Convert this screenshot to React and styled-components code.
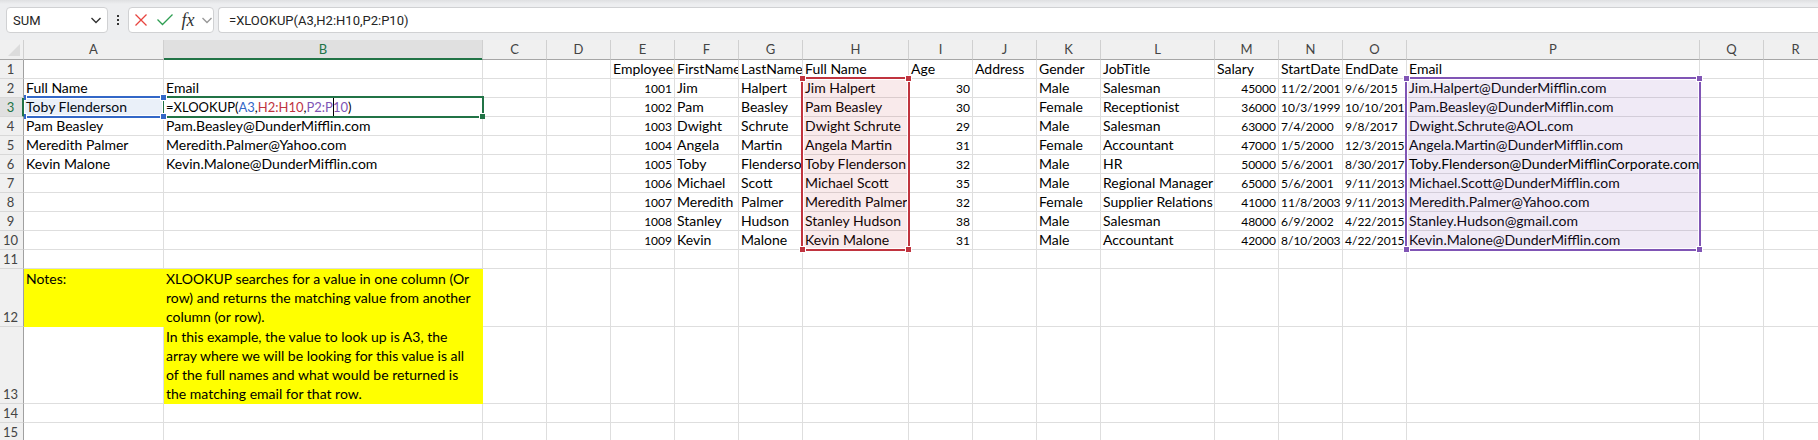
import React from "react";
import styled, { createGlobalStyle, css } from "styled-components";

const GlobalStyle = createGlobalStyle`
  * { box-sizing: border-box; }
  body {
    margin: 0;
    background: #fff;
    color: #000;
    font-family: Lato, "Open Sans", sans-serif;
    font-size: 14px;
  }
`;

const Workbook = styled.main`
  min-height: 100vh;
  overflow: hidden;
`;

const FormulaBar = styled.form`
  display: flex;
  align-items: flex-start;
  height: 40px;
  padding: 7px 0 0 6px;
  background: linear-gradient(#dfe0e2, #edeef0 4px);
`;

const box = css`
  height: 26px;
  background: #fff;
  border: 1px solid #d0d1d3;
  border-radius: 4px;
`;

const NameBox = styled.div`
  ${box}
  display: flex;
  align-items: center;
  width: 102px;
  padding: 0 6px;
`;

const NameInput = styled.input`
  flex: 1;
  min-width: 0;
  padding: 0;
  border: 0;
  outline: 0;
  background: none;
  color: #242424;
  font: 13px Roboto, sans-serif;
`;

const IconButton = styled.button`
  display: flex;
  align-items: center;
  justify-content: center;
  height: 24px;
  padding: 0;
  border: 0;
  background: none;
`;

const FunctionButton = styled(IconButton)`
  width: 16px;
  color: #333;
  font: italic 18px "Liberation Serif", serif;
`;

const Grip = styled.div`
  display: flex;
  align-items: center;
  justify-content: center;
  width: 20px;
  height: 26px;
`;

const Actions = styled.div`
  ${box}
  display: flex;
  gap: 6px;
  width: 86px;
  padding-left: 5px;
  margin-right: 4px;
`;

const FormulaInput = styled.input`
  ${box}
  flex: 1;
  min-width: 0;
  padding: 0 10px;
  border-right: 0;
  border-radius: 4px 0 0 4px;
  outline: 0;
  color: #242424;
  font: 13px Roboto, sans-serif;
`;

const Sheet = styled.table`
  width: 1828px;
  table-layout: fixed;
  border-collapse: separate;
  border-spacing: 0;
`;

const Column = styled.col`
  width: ${(p) => p.$width}px;
`;

const ColumnHeader = styled.th`
  height: 20px;
  padding: 0;
  background: ${(p) => (p.$active ? "#e0e0e0" : "#f0f0f0")};
  border-right: 1px solid #d0d0d0;
  border-bottom: 1px solid ${(p) => (p.$active ? "#217346" : "#a6a6a6")};
  box-shadow: ${(p) => (p.$active ? "inset 0 -1px #217346" : "none")};
  color: ${(p) => (p.$active ? "#217346" : "#444")};
  font-size: 13px;
  font-weight: 400;
  line-height: 19px;
`;

const SelectAllButton = styled.button`
  display: flex;
  justify-content: flex-end;
  width: 100%;
  height: 19px;
  padding: 4px 3px 0 0;
  border: 0;
  background: none;
`;

const RowHeader = styled.th`
  position: relative;
  z-index: 3;
  height: ${(p) => p.$height}px;
  padding: 0 ${(p) => (p.$active ? 1 : 2)}px 0 0;
  vertical-align: bottom;
  background: ${(p) => (p.$active ? "#e0e0e0" : "#f0f0f0")};
  border-right: ${(p) => (p.$active ? "2px solid #217346" : "1px solid #a0a0a0")};
  border-bottom: 1px solid #d8d8d8;
  color: ${(p) => (p.$active ? "#217346" : "#444")};
  font-weight: 400;
  line-height: 18px;
`;

const Cell = styled.td`
  position: relative;
  padding: 0;
  vertical-align: ${(p) => (p.$note ? "top" : "bottom")};
  background: ${(p) => (p.$note ? "#ff0" : "#fff")};
  border-right: 1px solid ${(p) => (p.$note ? "#ff0" : "#dedede")};
  border-bottom: 1px solid ${(p) => (p.$note ? "#ff0" : "#dedede")};
  text-align: ${(p) => (p.$number ? "right" : "left")};
`;

const Value = styled.div`
  position: ${(p) => (p.$spill ? "relative" : "static")};
  z-index: 2;
  height: ${(p) => (p.$wrap ? "auto" : "18px")};
  padding-left: 2px;
  padding-right: ${(p) => (p.$wrap ? 6 : p.$number ? 2 : 0)}px;
  overflow: ${(p) => (p.$spill ? "visible" : "hidden")};
  white-space: ${(p) => (p.$wrap ? "normal" : "nowrap")};
  line-height: ${(p) => (p.$wrap ? 19 : 18)}px;
`;

const Digits = styled.span`
  font-size: 12px;
  line-height: 1;
`;

const Formula = styled.span`
  font-size: 13px;
  line-height: 1;
`;

const tones = {
  blue: ["#3367c7", "rgba(51, 103, 199, 0.1)"],
  red: ["#c0343f", "rgba(192, 52, 63, 0.1)"],
  purple: ["#8055b5", "rgba(128, 85, 181, 0.12)"],
};

const RangeOutline = styled.div`
  position: absolute;
  z-index: 2;
  top: -2px;
  left: -2px;
  width: calc(100% + 4px);
  height: ${(p) => p.$rows * 19 + 3}px;
  pointer-events: none;
  border: 2px solid ${(p) => tones[p.$tone][0]};
  ${(p) => p.$openSides && "border-left-color: transparent; border-right-color: transparent;"}
  background: ${(p) => tones[p.$tone][1]};
  background-clip: padding-box;
  box-shadow: inset 0 0 0 1px #fff;
`;

const Handle = styled.i`
  position: absolute;
  width: 7px;
  height: 7px;
  border: 1px solid #fff;
  background: ${(p) => tones[p.$tone][0]};
  ${(p) => p.$y}: -4px;
  ${(p) => p.$x}: -4px;
`;

const EditOutline = styled.div`
  position: absolute;
  z-index: 1;
  top: -2px;
  left: -2px;
  width: calc(100% + 4px);
  height: 22px;
  border: 2px solid #217346;
  pointer-events: none;
`;

const FillHandle = styled.i`
  position: absolute;
  right: -3px;
  bottom: -3px;
  width: 6px;
  height: 6px;
  border: solid #fff;
  border-width: 1px 0 0 1px;
  background: #217346;
`;

const Reference = styled.span`
  color: ${(p) => tones[p.$tone][0]};
`;

const Caret = styled.span`
  display: inline-block;
  width: 1px;
  height: 18px;
  margin-right: -1px;
  background: #000;
  vertical-align: top;
`;

function Chevron({ color }) {
  return (
    <svg width="10" height="7" viewBox="0 0 10 7" fill="none" stroke={color} strokeWidth="1.4">
      <path d="M.5 1 5 5.5 9.500 1" />
    </svg>
  );
}

const columns = [
  ["A", 140], ["B", 319], ["C", 64], ["D", 64], ["E", 64], ["F", 64], ["G", 64],
  ["H", 106], ["I", 64], ["J", 64], ["K", 64], ["L", 114], ["M", 64], ["N", 64],
  ["O", 64], ["P", 293], ["Q", 64], ["R", 64],
];

const employeeFields = ["E", "F", "G", "H", "I", "J", "K", "L", "M", "N", "O", "P"];

const employees = [
  "EmployeeID|FirstName|LastName|Full Name|Age|Address|Gender|JobTitle|Salary|StartDate|EndDate|Email",
  "1001|Jim|Halpert|Jim Halpert|30||Male|Salesman|45000|11/2/2001|9/6/2015|Jim.Halpert@DunderMifflin.com",
  "1002|Pam|Beasley|Pam Beasley|30||Female|Receptionist|36000|10/3/1999|10/10/2017|Pam.Beasley@DunderMifflin.com",
  "1003|Dwight|Schrute|Dwight Schrute|29||Male|Salesman|63000|7/4/2000|9/8/2017|Dwight.Schrute@AOL.com",
  "1004|Angela|Martin|Angela Martin|31||Female|Accountant|47000|1/5/2000|12/3/2015|Angela.Martin@DunderMifflin.com",
  "1005|Toby|Flenderson|Toby Flenderson|32||Male|HR|50000|5/6/2001|8/30/2017|Toby.Flenderson@DunderMifflinCorporate.com",
  "1006|Michael|Scott|Michael Scott|35||Male|Regional Manager|65000|5/6/2001|9/11/2013|Michael.Scott@DunderMifflin.com",
  "1007|Meredith|Palmer|Meredith Palmer|32||Female|Supplier Relations|41000|11/8/2003|9/11/2013|Meredith.Palmer@Yahoo.com",
  "1008|Stanley|Hudson|Stanley Hudson|38||Male|Salesman|48000|6/9/2002|4/22/2015|Stanley.Hudson@gmail.com",
  "1009|Kevin|Malone|Kevin Malone|31||Male|Accountant|42000|8/10/2003|4/22/2015|Kevin.Malone@DunderMifflin.com",
];

const cells = {
  A2: "Full Name", B2: "Email",
  A3: "Toby Flenderson",
  A4: "Pam Beasley", B4: "Pam.Beasley@DunderMifflin.com",
  A5: "Meredith Palmer", B5: "Meredith.Palmer@Yahoo.com",
  A6: "Kevin Malone", B6: "Kevin.Malone@DunderMifflin.com",
  A12: "Notes:",
  B12: "XLOOKUP searches for a value in one column (Or row) and returns the matching value from another column (or row).",
  B13: "In this example, the value to look up is A3, the array where we will be looking for this value is all of the full names and what would be returned is the matching email for that row.",
};
employees.forEach((line, i) => {
  line.split("|").forEach((value, j) => {
    cells[employeeFields[j] + (i + 1)] = value;
  });
});

const notes = ["A12", "B12", "B13"];
const ranges = { A3: ["blue", 1], H2: ["red", 9], P2: ["purple", 9] };
const rowHeights = { 12: 58, 13: 77 };
const rows = Array.from({ length: 15 }, (_, i) => i + 1);
const corners = [["top", "left"], ["top", "right"], ["bottom", "left"], ["bottom", "right"]];

function Range({ tone, span }) {
  return (
    <RangeOutline $tone={tone} $rows={span} $openSides={tone === "blue"}>
      {corners.map(([y, x]) => (
        <Handle key={y + x} $tone={tone} $y={y} $x={x} />
      ))}
    </RangeOutline>
  );
}

function SheetCell({ id }) {
  const text = cells[id];
  const note = notes.includes(id);
  const range = ranges[id];
  const number = /^\d+$/.test(text);
  if (id === "B3") {
    return (
      <Cell>
        <Value>
          <Formula>
            =XLOOKUP(<Reference $tone="blue">A3</Reference>,
            <Reference $tone="red">H2:H10</Reference>,
            <Reference $tone="purple">P2:P<Caret />10</Reference>)
          </Formula>
        </Value>
        <EditOutline><FillHandle /></EditOutline>
      </Cell>
    );
  }
  return (
    <Cell $note={note} $number={number}>
      {text && (
        <Value $wrap={note} $spill={id === "P6"} $number={number}>
          {/^[\d/]+$/.test(text) ? <Digits>{text}</Digits> : text}
        </Value>
      )}
      {range && <Range tone={range[0]} span={range[1]} />}
    </Cell>
  );
}

export default function App() {
  return (
    <Workbook>
      <GlobalStyle />
      <FormulaBar onSubmit={(e) => e.preventDefault()}>
        <NameBox>
          <NameInput aria-label="Name box" defaultValue="SUM" />
          <IconButton type="button" aria-label="Named ranges"><Chevron color="#333" /></IconButton>
        </NameBox>
        <Grip>
          <svg width="2" height="10" viewBox="0 0 2 10" fill="#333">
            <path d="M0 0h2v2H0zM0 4h2v2H0zM0 8h2v2H0z" />
          </svg>
        </Grip>
        <Actions>
          <IconButton type="button" aria-label="Cancel">
            <svg width="16" height="16" viewBox="0 0 16 16" fill="none" stroke="#e8443f" strokeWidth="1.3">
              <path d="M1.500 2.500 12.500 13.500M12.500 2.500 1.500 13.500" />
            </svg>
          </IconButton>
          <IconButton type="button" aria-label="Enter">
            <svg width="18" height="16" viewBox="0 0 18 16" fill="none" stroke="#2e9e52" strokeWidth="1.3">
              <path d="M1.500 7.500 6.500 12.500 16.500 2.500" />
            </svg>
          </IconButton>
          <FunctionButton type="button" aria-label="Insert function">fx</FunctionButton>
          <IconButton type="button" aria-label="Function options"><Chevron color="#999" /></IconButton>
        </Actions>
        <FormulaInput aria-label="Formula" defaultValue="=XLOOKUP(A3,H2:H10,P2:P10)" />
      </FormulaBar>
      <Sheet>
        <colgroup>
          <Column $width={24} />
          {columns.map(([name, width]) => <Column key={name} $width={width} />)}
        </colgroup>
        <thead>
          <tr>
            <ColumnHeader>
              <SelectAllButton type="button" aria-label="Select all">
                <svg width="12" height="12" viewBox="0 0 12 12"><path d="M12 0v12H0z" fill="#dcdcdc" /></svg>
              </SelectAllButton>
            </ColumnHeader>
            {columns.map(([name]) => (
              <ColumnHeader key={name} scope="col" $active={name === "B"}>{name}</ColumnHeader>
            ))}
          </tr>
        </thead>
        <tbody>
          {rows.map((row) => (
            <tr key={row}>
              <RowHeader scope="row" $height={rowHeights[row] || 19} $active={row === 3}>
                <Formula>{row}</Formula>
              </RowHeader>
              {columns.map(([name]) => <SheetCell key={name} id={name + row} />)}
            </tr>
          ))}
        </tbody>
      </Sheet>
    </Workbook>
  );
}
